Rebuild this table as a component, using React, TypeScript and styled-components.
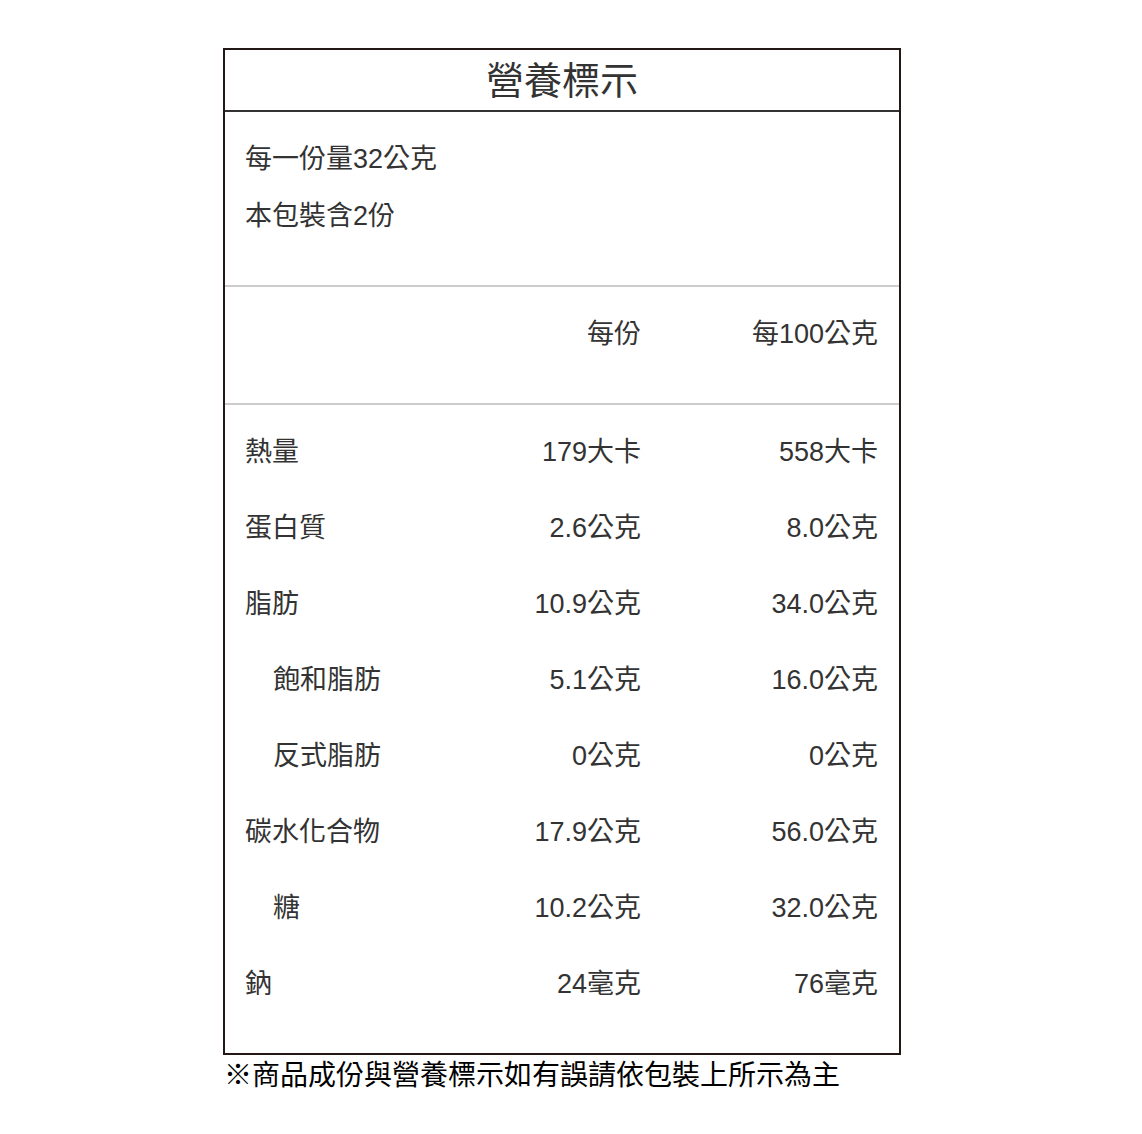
import styled, { createGlobalStyle } from "styled-components";

const GlobalStyle = createGlobalStyle`
  html, body {
    margin: 0;
    padding: 0;
    background: #ffffff;
  }
  body {
    font-family: "Liberation Sans", "Noto Sans CJK TC", sans-serif;
  }
`;

type Row = { label: string; sub?: boolean; perServing: string; per100: string };

const rows: Row[] = [
  { label: "熱量", perServing: "179大卡", per100: "558大卡" },
  { label: "蛋白質", perServing: "2.6公克", per100: "8.0公克" },
  { label: "脂肪", perServing: "10.9公克", per100: "34.0公克" },
  { label: "飽和脂肪", sub: true, perServing: "5.1公克", per100: "16.0公克" },
  { label: "反式脂肪", sub: true, perServing: "0公克", per100: "0公克" },
  { label: "碳水化合物", perServing: "17.9公克", per100: "56.0公克" },
  { label: "糖", sub: true, perServing: "10.2公克", per100: "32.0公克" },
  { label: "鈉", perServing: "24毫克", per100: "76毫克" },
];

const App = () => {
  return (
    <Page>
      <GlobalStyle />
      <Wrapper>
        <Label>
          <Title>營養標示</Title>
          <Section>
            <Line>每一份量32公克</Line>
            <Line>本包裝含2份</Line>
          </Section>
          <Section>
            <Grid>
              <Cell />
              <Value>每份</Value>
              <Value>每100公克</Value>
            </Grid>
          </Section>
          <Section>
            <Grid gap="true">
              {rows.map((r) => (
                <NutrientRow key={r.label} r={r} />
              ))}
            </Grid>
          </Section>
        </Label>
        <Note>※商品成份與營養標示如有誤請依包裝上所示為主</Note>
      </Wrapper>
    </Page>
  );
};

const NutrientRow = ({ r }: { r: Row }) => (
  <>
    <Cell sub={r.sub ? "true" : ""}>{r.label}</Cell>
    <Value>{r.perServing}</Value>
    <Value>{r.per100}</Value>
  </>
);

const Page = styled.div`
  width: 1142px;
  min-height: 1134px;
  padding-top: 48px;
  box-sizing: border-box;
`;

const Wrapper = styled.div`
  width: 678px;
  margin-left: 223px;
`;

const Label = styled.div`
  border: 2px solid #231815;
  color: #333333;
`;

const Title = styled.div`
  height: 60px;
  line-height: 62px;
  text-align: center;
  font-size: 38px;
  border-bottom: 2px solid #333333;
`;

const Section = styled.div`
  padding: 19px 21px 40px 20px;
  border-bottom: 2px solid #cccccc;

  &:last-child {
    border-bottom: none;
  }
`;

const Line = styled.div`
  font-size: 27px;
  line-height: 57px;
`;

const Grid = styled.div<{ gap?: string }>`
  display: grid;
  grid-template-columns: 1fr 200px 237px;
  row-gap: ${(props) => (props.gap ? "19px" : "0")};
  font-size: 27px;
  line-height: 57px;
`;

const Cell = styled.div<{ sub?: string }>`
  padding-left: ${(props) => (props.sub ? "28px" : "0")};
  white-space: nowrap;
`;

const Value = styled.div`
  text-align: right;
  white-space: nowrap;
`;

const Note = styled.div`
  font-size: 28px;
  line-height: 42px;
  color: #000000;
  white-space: nowrap;
  margin-left: 1px;
`;

export default App;
